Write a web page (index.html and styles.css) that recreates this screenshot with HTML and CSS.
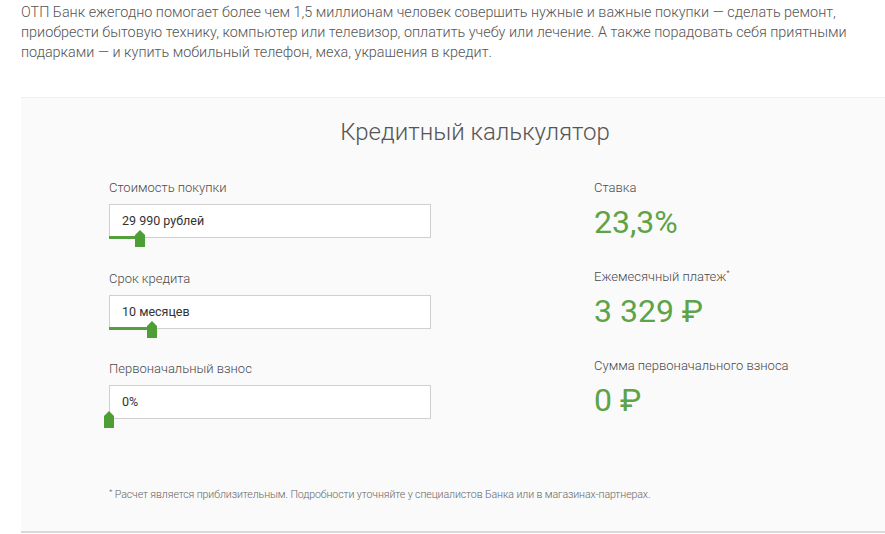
FILE: index.html
```html
<!DOCTYPE html>
<html lang="ru">
<head>
<meta charset="utf-8">
<link rel="stylesheet" href="styles.css">
</head>
<body>
<p class="intro">ОТП Банк ежегодно помогает более чем 1,5 миллионам человек совершить нужные и важные покупки — сделать ремонт,<br>приобрести бытовую технику, компьютер или телевизор, оплатить учебу или лечение. А также порадовать себя приятными<br>подарками — и купить мобильный телефон, меха, украшения в кредит.</p>
<section class="calc">
  <div class="inner">
    <h2 class="title">Кредитный калькулятор</h2>
    <div class="cols">
      <div class="left">
        <div class="field">
          <div class="label">Стоимость покупки</div>
          <div class="input">29 990 рублей</div>
          <div class="slider"><div class="fill" style="width:31px"></div><div class="thumb" style="left:26px"></div></div>
        </div>
        <div class="field">
          <div class="label">Срок кредита</div>
          <div class="input">10 месяцев</div>
          <div class="slider"><div class="fill" style="width:43px"></div><div class="thumb" style="left:38px"></div></div>
        </div>
        <div class="field">
          <div class="label">Первоначальный взнос</div>
          <div class="input">0%</div>
          <div class="slider"><div class="fill" style="width:0px"></div><div class="thumb" style="left:-5px"></div></div>
        </div>
      </div>
      <div class="right">
        <div class="res">
          <div class="rlabel">Ставка</div>
          <div class="value">23,3%</div>
        </div>
        <div class="res">
          <div class="rlabel">Ежемесячный платеж<sup>*</sup></div>
          <div class="value">3 329 ₽</div>
        </div>
        <div class="res">
          <div class="rlabel">Сумма первоначального взноса</div>
          <div class="value">0 ₽</div>
        </div>
      </div>
    </div>
    <p class="note"><sup>*</sup> Расчет является приблизительным. Подробности уточняйте у специалистов Банка или в магазинах-партнерах.</p>
  </div>
</section>
</body>
</html>
```
FILE: styles.css
```css
html, body {
  margin: 0;
  padding: 0;
  background: #fff;
  font-family: Roboto, "Liberation Sans", sans-serif;
  overflow: hidden;
}
.intro {
  margin: 3px 0 0 21px;
  font-size: 14.4px;
  line-height: 20px;
  font-weight: 300;
  color: #555;
  white-space: nowrap;
}
.calc {
  margin: 34px 0 0 21px;
  width: 900px;
  height: 436px;
  background: #fafafa;
  border-top: 1px solid #efefef;
  border-bottom: 2px solid #d9d9d9;
  box-sizing: border-box;
}
.inner {
  width: 732px;
  margin-left: 88px;
  padding-top: 19px;
}
.title {
  margin: 0;
  text-align: center;
  font-size: 24px;
  line-height: 30px;
  font-weight: 300;
  color: #555;
}
.cols {
  display: flex;
  margin-top: 33px;
}
.left {
  width: 322px;
  display: flex;
  flex-direction: column;
  gap: 33px;
}
.field:last-child {
  margin-top: -1px;
}
.label, .rlabel {
  font-size: 13px;
  line-height: 16px;
  font-weight: 300;
  color: #4a4a4a;
}
.input {
  margin-top: 8px;
  height: 34px;
  box-sizing: border-box;
  border: 1px solid #cfcfcf;
  background: #fff;
  padding-left: 12px;
  font-size: 12.5px;
  line-height: 32px;
  color: #333;
}
.slider {
  position: relative;
  height: 0;
}
.fill {
  position: absolute;
  left: 0;
  top: -2px;
  height: 3px;
  background: #53a03c;
}
.thumb {
  position: absolute;
  top: -8px;
  width: 10px;
  height: 17px;
  background: #4e9e38;
  clip-path: polygon(50% 0, 100% 30%, 100% 100%, 0 100%, 0 30%);
}
.right {
  margin-left: 163px;
  display: flex;
  flex-direction: column;
  gap: 28px;
}
.value {
  margin-top: 7px;
  font-size: 32px;
  line-height: 38px;
  font-weight: 400;
  color: #5da347;
}
sup {
  font-size: 8px;
  line-height: 0;
  vertical-align: 6px;
}
.note {
  margin: 69px 0 0;
  font-size: 10.6px;
  line-height: 14px;
  font-weight: 300;
  color: #666;
  letter-spacing: -0.1px;
}
.note sup {
  font-size: 8px;
  vertical-align: 4px;
}
```
